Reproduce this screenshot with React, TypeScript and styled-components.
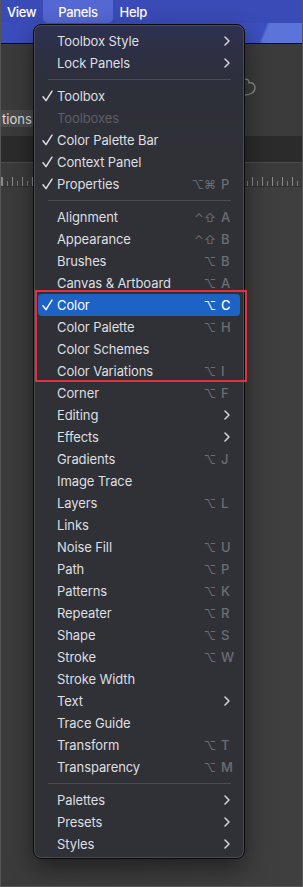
import React from "react";
import styled, { createGlobalStyle } from "styled-components";

type Entry =
  | { type: "item"; label: string; checked?: boolean; disabled?: boolean; active?: boolean; mods?: string; keyName?: string; submenu?: boolean }
  | { type: "sep" }
  | { type: "group"; items: Entry[] };

const entries: Entry[] = [
  { type: "item", label: "Toolbox Style", submenu: true },
  { type: "item", label: "Lock Panels", submenu: true },
  { type: "sep" },
  { type: "item", label: "Toolbox", checked: true },
  { type: "item", label: "Toolboxes", disabled: true },
  { type: "item", label: "Color Palette Bar", checked: true },
  { type: "item", label: "Context Panel", checked: true },
  { type: "item", label: "Properties", checked: true, mods: "⌥⌘", keyName: "P" },
  { type: "sep" },
  { type: "item", label: "Alignment", mods: "⌃⇧", keyName: "A" },
  { type: "item", label: "Appearance", mods: "⌃⇧", keyName: "B" },
  { type: "item", label: "Brushes", mods: "⌥", keyName: "B" },
  { type: "item", label: "Canvas & Artboard", mods: "⌥", keyName: "A" },
  {
    type: "group",
    items: [
      { type: "item", label: "Color", checked: true, active: true, mods: "⌥", keyName: "C" },
      { type: "item", label: "Color Palette", mods: "⌥", keyName: "H" },
      { type: "item", label: "Color Schemes" },
      { type: "item", label: "Color Variations", mods: "⌥", keyName: "I" },
    ],
  },
  { type: "item", label: "Corner", mods: "⌥", keyName: "F" },
  { type: "item", label: "Editing", submenu: true },
  { type: "item", label: "Effects", submenu: true },
  { type: "item", label: "Gradients", mods: "⌥", keyName: "J" },
  { type: "item", label: "Image Trace" },
  { type: "item", label: "Layers", mods: "⌥", keyName: "L" },
  { type: "item", label: "Links" },
  { type: "item", label: "Noise Fill", mods: "⌥", keyName: "U" },
  { type: "item", label: "Path", mods: "⌥", keyName: "P" },
  { type: "item", label: "Patterns", mods: "⌥", keyName: "K" },
  { type: "item", label: "Repeater", mods: "⌥", keyName: "R" },
  { type: "item", label: "Shape", mods: "⌥", keyName: "S" },
  { type: "item", label: "Stroke", mods: "⌥", keyName: "W" },
  { type: "item", label: "Stroke Width" },
  { type: "item", label: "Text", submenu: true },
  { type: "item", label: "Trace Guide" },
  { type: "item", label: "Transform", mods: "⌥", keyName: "T" },
  { type: "item", label: "Transparency", mods: "⌥", keyName: "M" },
  { type: "sep" },
  { type: "item", label: "Palettes", submenu: true },
  { type: "item", label: "Presets", submenu: true },
  { type: "item", label: "Styles", submenu: true },
];

const GlobalStyle = createGlobalStyle`
  body {
    margin: 0;
    background: #3d3d3d;
    font-family: Inter, "DejaVu Sans", sans-serif;
    -webkit-font-smoothing: antialiased;
  }
`;

const Frame = styled.div`
  position: relative;
  width: 303px;
  height: 887px;
  box-sizing: border-box;
  border: 1px solid #565656;
  border-top: none;
  display: flex;
  flex-direction: column;
  overflow: hidden;
  background: #3d3d3d;
`;

const MenuBar = styled.div`
  height: 23px;
  flex-shrink: 0;
  display: flex;
  align-items: stretch;
  gap: 6px;
  padding-left: 5px;
  background: #3a4bb7;
`;

const MenuTitle = styled.div<{ $open?: boolean }>`
  display: flex;
  align-items: center;
  padding: ${(p) => (p.$open ? "0 15px" : "0 1px")};
  border-radius: ${(p) => (p.$open ? "0 0 5px 5px" : "0")};
  background: ${(p) => (p.$open ? "#5467d2" : "transparent")};
  color: #fff;
  font-size: 13px;
  font-weight: 500;
  letter-spacing: -0.35px;
`;

const Wallpaper = styled.div`
  height: 20px;
  flex-shrink: 0;
  background: linear-gradient(112deg, #3b4dbb 0%, #3c4fbf 86%, #5a74da 87%, #5a74da 100%);
  border-bottom: 1px solid #0e0e0e;
`;

const Toolbar = styled.div`
  height: 92px;
  flex-shrink: 0;
  display: flex;
  align-items: flex-start;
  background: #3b3b3b;
`;

const SegmentButton = styled.div`
  align-self: flex-end;
  margin-bottom: 9px;
  height: 17px;
  width: 32px;
  display: flex;
  align-items: center;
  padding-left: 1px;
  box-sizing: border-box;
  background: #4b4b4b;
  color: #dedede;
  font-size: 13px;
  overflow: hidden;
`;

const ToolIcon = styled.svg`
  margin: 34px 46px 0 auto;
  flex-shrink: 0;
`;

const TabBand = styled.div`
  height: 26px;
  flex-shrink: 0;
  background: #2b2b2b;
  border-bottom: 1px solid #4d4d4d;
`;

const Ruler = styled.div`
  height: 23px;
  flex-shrink: 0;
  background-color: #3b3b3b;
  background-image:
    repeating-linear-gradient(90deg, #8a8a8a 0 1px, transparent 1px 10px),
    repeating-linear-gradient(90deg, transparent 0 5px, #7a7a7a 5px 6px, transparent 6px 10px);
  background-size: 100% 9px, 100% 5px;
  background-position: 1px 100%, 1px 100%;
  background-repeat: repeat-x;
  border-bottom: 1px solid #303030;
`;

const Canvas = styled.div`
  flex: 1;
  background: linear-gradient(90deg, #3b3b3b, #3f3f3f);
`;

const Menu = styled.div`
  position: absolute;
  top: 24px;
  left: 32px;
  width: 212px;
  box-sizing: border-box;
  padding: 5px 0 3px;
  border: 1px solid #0b0b0d;
  border-radius: 8px;
  background: linear-gradient(180deg, #2d3152 0px, #2d3046 22px, #2d2f3a 60px, #303136 140px, #303136 100%);
  box-shadow: inset 0 0 0 1px #4a4b52, 0 10px 24px rgba(0, 0, 0, 0.45);
`;

const Separator = styled.div`
  height: 11px;
  display: flex;
  align-items: center;
  padding: 0 13px 0 14px;
  &::before {
    content: "";
    flex: 1;
    height: 1px;
    background: #4b4c52;
  }
`;

const Row = styled.div<{ $active?: boolean; $disabled?: boolean }>`
  height: 22px;
  margin: 0 4px;
  padding-right: 5px;
  display: grid;
  grid-template-columns: 19px 1fr auto 14px;
  align-items: center;
  border-radius: 4px;
  font-size: 13px;
  background: ${(p) => (p.$active ? "#1d63c6" : "transparent")};
  color: ${(p) => (p.$disabled ? "#5d5e64" : p.$active ? "#ffffff" : "#dedfe2")};
`;

const CheckCell = styled.span`
  display: flex;
  align-items: center;
  padding-left: 4px;
`;

const Label = styled.span`
  white-space: nowrap;
  letter-spacing: -0.1px;
`;

const Mods = styled.span<{ $active?: boolean }>`
  padding-right: 5px;
  font-size: 12px;
  color: ${(p) => (p.$active ? "#ffffff" : "#6c6d73")};
`;

const KeyCell = styled.span<{ $active?: boolean }>`
  display: flex;
  align-items: center;
  font-size: 13px;
  font-weight: 500;
  color: ${(p) => (p.$active ? "#ffffff" : "#6c6d73")};
`;

const Chevron = styled.svg`
  margin-left: 3px;
`;

const RedGroup = styled.div`
  position: relative;
  &::after {
    content: "";
    position: absolute;
    top: -4px;
    left: 1px;
    right: -3px;
    bottom: 0;
    border: 2px solid #e3303f;
    pointer-events: none;
  }
`;

function CheckMark() {
  return (
    <svg width="11" height="12" viewBox="0 0 11 12">
      <path d="M1 6.8 L4 10.6 L10 1.2" fill="none" stroke="currentColor" strokeWidth="1.5" strokeLinecap="round" strokeLinejoin="round" />
    </svg>
  );
}

function MenuRow({ entry }: { entry: Extract<Entry, { type: "item" }> }) {
  return (
    <Row $active={entry.active} $disabled={entry.disabled}>
      <CheckCell>{entry.checked && <CheckMark />}</CheckCell>
      <Label>{entry.label}</Label>
      <Mods $active={entry.active}>{entry.mods}</Mods>
      <KeyCell $active={entry.active}>
        {entry.submenu ? (
          <Chevron width="6" height="10" viewBox="0 0 6 10">
            <path d="M1 1 L5 5 L1 9" fill="none" stroke="#d6d6d8" strokeWidth="1.5" strokeLinecap="round" strokeLinejoin="round" />
          </Chevron>
        ) : (
          entry.keyName
        )}
      </KeyCell>
    </Row>
  );
}

function renderEntry(entry: Entry, i: number): React.ReactNode {
  if (entry.type === "sep") return <Separator key={i} />;
  if (entry.type === "group") return <RedGroup key={i}>{entry.items.map(renderEntry)}</RedGroup>;
  return <MenuRow key={i} entry={entry} />;
}

export default function App() {
  return (
    <>
      <GlobalStyle />
      <Frame>
        <MenuBar>
          <MenuTitle>View</MenuTitle>
          <MenuTitle $open>Panels</MenuTitle>
          <MenuTitle>Help</MenuTitle>
        </MenuBar>
        <Wallpaper />
        <Toolbar>
          <SegmentButton>tions</SegmentButton>
          <ToolIcon width="12" height="18" viewBox="0 0 12 18">
            <path d="M0 2 C3 0 5 2 5 5 C8 4 11 6 11 10 C11 14 7 17 0 17" fill="none" stroke="#8b8b8b" strokeWidth="1.3" />
          </ToolIcon>
        </Toolbar>
        <TabBand />
        <Ruler />
        <Canvas />
        <Menu>{entries.map(renderEntry)}</Menu>
      </Frame>
    </>
  );
}
